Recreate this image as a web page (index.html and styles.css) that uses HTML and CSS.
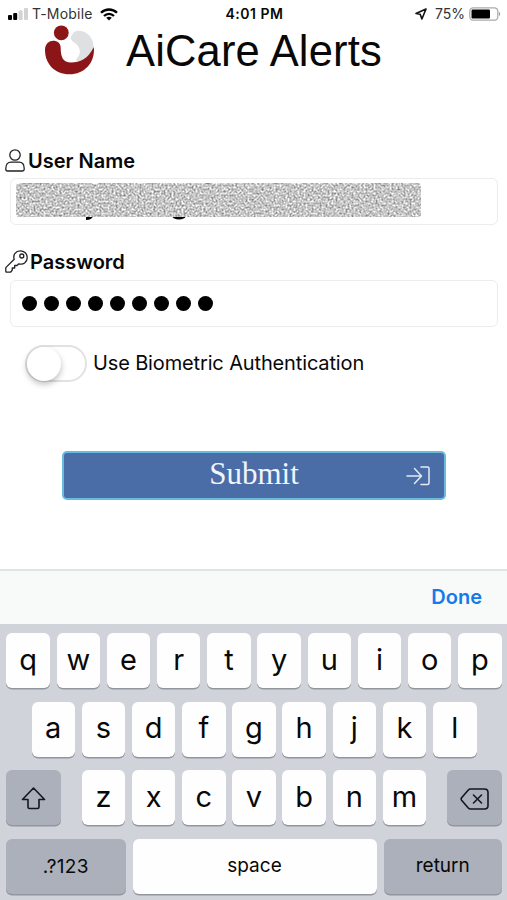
FILE: index.html
```html
<!DOCTYPE html>
<html lang="en">
<head>
<meta charset="utf-8">
<title>AiCare Alerts</title>
<link rel="stylesheet" href="styles.css">
</head>
<body>
<div class="status">
  <div class="status-side">
    <svg width="21" height="12" viewBox="0 0 21 12"><rect x="0" y="7" width="4" height="5" rx="1"/><rect x="5.2" y="5" width="4" height="7" rx="1"/><g fill="#d2d2d2"><rect x="10.6" y="2.5" width="4" height="9.5" rx="1"/><rect x="16" y="0" width="4" height="12" rx="1"/></g></svg>
    <span class="carrier">T-Mobile</span>
    <svg class="wifi" width="18" height="13" viewBox="0 0 18 13" fill="none" stroke="#000" stroke-width="2.3"><path d="M1 4.8C5.5.4 12.500.4 17 4.800M4 8C6.900 5.100 11.100 5.100 14 8"/><path d="M6.200 9.800Q9 7.800 11.800 9.800L9 12.600Z" fill="#000" stroke="none"/></svg>
  </div>
  <span class="time">4:01 PM</span>
  <div class="status-side end">
    <svg width="12" height="12" viewBox="0 0 12 12" fill="none" stroke="#111" stroke-width="1.600" stroke-linejoin="round"><path d="M11 1L1 5.500L5.200 6.300L6.900 11Z"/></svg>
    <span class="percent">75%</span>
    <svg width="32" height="14" viewBox="0 0 32 14"><rect x=".8" y=".8" width="28" height="12.400" rx="3.500" fill="#fff" stroke="#aaa" stroke-width="1.300"/><rect x="2.500" y="2.600" width="18.500" height="8.800" rx="1.200"/><path d="M30 4.800Q32.300 7 30 9.200Z" fill="#999"/></svg>
  </div>
</div>
<header class="brand">
  <svg width="50" height="50" viewBox="0 0 50 50">
    <path d="M25.700 12C27 7 30 4.500 34 4.700C43 5.500 48.500 12 48.500 21C46 28 41 33 35 35.500C31 36 30 34 33 31C36 27 35 23 32.500 19.500C30 16 26 15.500 25.700 12Z" fill="#dfe0e1"/>
    <circle cx="16.300" cy="6.800" r="7.400" fill="#8c1517"/>
    <path d="M0 24C0 12 15.700 12 15.700 22C15.700 31 18 36.500 26 36.500C35 36.500 43 33 48.800 21C50.500 37 39 48.300 24.500 48.300C10 48.300 0 38 0 24Z" fill="#8c1517"/>
  </svg>
  <h1>AiCare Alerts</h1>
</header>
<main class="form">
  <label class="label user"><svg width="20" height="23" viewBox="0 0 20 23" fill="none" stroke="#222" stroke-width="1.300"><circle cx="10" cy="6" r="5.200"/><path d="M.8 19.500C.8 15 3 13.200 6 13.200H14C17 13.200 19.200 15 19.200 19.500V20.300Q19.200 22 17.500 22H2.500Q.8 22 .8 20.300Z"/></svg><span>User Name</span></label>
  <div class="field">
    <svg width="406" height="38" viewBox="0 0 406 38">
      <filter id="grain" x="0" y="0" width="100%" height="100%" color-interpolation-filters="sRGB"><feTurbulence type="fractalNoise" baseFrequency=".5" numOctaves="2" seed="8"/><feColorMatrix values=".75 .4 0 0 .2  .75 .4 0 0 .2  .75 .4 0 0 .2  0 0 0 0 1"/><feComposite in2="SourceGraphic" operator="in"/></filter>
      <path d="M70 33H77Q76 37 70 37Z"/><ellipse cx="163" cy="33.500" rx="6.500" ry="3"/>
      <rect width="405" height="34" rx="3" fill="#ccc" filter="url(#grain)"/>
    </svg>
  </div>
  <label class="label pass"><svg width="23" height="23" viewBox="0 0 23 23" fill="none" stroke="#222" stroke-width="1.300" stroke-linejoin="round"><path d="M9.200 9.200C7.700 4.800 10.800.8 15.300.8C19.300.8 22.200 3.700 22.200 7.700C22.200 12.200 18.200 15.300 13.800 13.800L12 15.500H9.700V18H7.200V20.300L5.500 22.200H1.500Q.8 22.200.8 21.500V17.600Z"/><circle cx="16.800" cy="6" r="2"/></svg><span>Password</span></label>
  <div class="field dots"><i></i><i></i><i></i><i></i><i></i><i></i><i></i><i></i><i></i></div>
  <div class="option"><span class="toggle"><i></i></span><span class="option-text">Use Biometric Authentication</span></div>
  <button class="submit"><span>Submit</span><svg width="24" height="20" viewBox="0 0 24 20" fill="none" stroke="#e4e9f3" stroke-width="1.500" stroke-linecap="round" stroke-linejoin="round"><path d="M1 10H15M8.500 2.500L15.500 10L8.500 17.500M15 1H21.500Q23 1 23 2.500V17Q23 18.500 21.500 18.500H15"/></svg></button>
</main>
<section class="keyboard">
  <div class="toolbar">Done</div>
  <div class="keys">
    <div class="row"><b>q</b><b>w</b><b>e</b><b>r</b><b>t</b><b>y</b><b>u</b><b>i</b><b>o</b><b>p</b></div>
    <div class="row"><b>a</b><b>s</b><b>d</b><b>f</b><b>g</b><b>h</b><b>j</b><b>k</b><b>l</b></div>
    <div class="row spread">
      <b class="dark"><svg width="25" height="23" viewBox="0 0 25 23" fill="none" stroke="#111820" stroke-width="1.600" stroke-linejoin="round"><path d="M12.500 1L23.500 12.500H18V20Q18 21.500 16.500 21.500H8.500Q7 21.500 7 20V12.500H1.500Z"/></svg></b>
      <div class="row"><b>z</b><b>x</b><b>c</b><b>v</b><b>b</b><b>n</b><b>m</b></div>
      <b class="dark"><svg width="29" height="22" viewBox="0 0 29 22" fill="none" stroke="#111820" stroke-width="1.600" stroke-linejoin="round" stroke-linecap="round"><path d="M10.500 1H24.500Q28 1 28 4.500V17.500Q28 21 24.500 21H10.500Q9.200 21 8.300 20L1.600 12.200Q.7 11 1.600 9.800L8.300 2Q9.200 1 10.500 1ZM13.500 7L21.500 15M21.500 7L13.500 15"/></svg></b>
    </div>
    <div class="row spread words"><b class="dark num">.?123</b><b class="space">space</b><b class="dark return">return</b></div>
  </div>
</section>
</body>
</html>
```

FILE: styles.css
```css
* { box-sizing: border-box; }
body { margin: 0; width: 507px; height: 900px; overflow: hidden; background: #fff; color: #080808; font-family: Inter, "Liberation Sans", sans-serif; display: flex; flex-direction: column; }
svg { display: block; flex: none; }
.status { height: 26px; padding: 1px 6px 0 8px; display: grid; grid-template-columns: 1fr auto 1fr; align-items: center; font-size: 14px; line-height: 26px; }
.status-side { display: flex; align-items: center; }
.carrier { margin-left: 3px; color: #333; letter-spacing: .2px; }
.wifi { margin-left: 7px; }
.time { font-weight: 600; letter-spacing: .5px; }
.end { justify-content: flex-end; }
.percent { margin: 0 4px 0 8px; color: #333; }
.brand { height: 122px; padding-left: 45px; display: flex; align-items: flex-start; }
.brand svg { overflow: visible; }
h1 { margin: 0 0 0 31px; font: 400 43.500px/50px "Liberation Sans", sans-serif; letter-spacing: .15px; white-space: nowrap; }
.form { height: 421px; }
.label { display: flex; align-items: center; height: 24px; font-size: 20px; font-weight: 600; line-height: 24px; }
.label span { padding-top: 1px; }
.user { padding-left: 5px; gap: 3px; }
.pass { padding-left: 5px; gap: 2px; margin-top: 24px; }
.field { height: 47px; width: 488px; margin: 6px 0 0 10px; padding: 4px 0 0 5px; border: 1px solid #ececec; border-radius: 6px; display: flex; }
.dots { margin-top: 7px; padding: 0 0 0 11px; align-items: center; gap: 7px; }
.dots i { width: 15px; height: 15px; border-radius: 50%; background: #000; }
.option { display: flex; align-items: center; height: 40px; margin: 16px 0 0 25px; gap: 6px; }
.toggle { width: 62px; height: 37px; border: 2px solid #e2e2e2; border-radius: 19px; }
.toggle i { display: block; width: 34px; height: 34px; border-radius: 50%; background: #fff; box-shadow: 0 3px 6px #0004; }
.option-text { font-size: 20px; letter-spacing: -.14px; white-space: nowrap; }
.submit { display: grid; grid-template-columns: 1fr auto 1fr; align-items: center; width: 384px; height: 49px; margin: 68px 0 0 62px; padding: 0 14px; border: 2px solid #68bddf; border-radius: 5px; background: #4a6da7; color: #f2f5fc; font: 31px/40px "Liberation Serif", serif; }
.submit span { grid-column: 2; margin-bottom: 4px; }
.submit svg { justify-self: end; }
.keyboard { flex: 1; background: #d0d3da; }
.toolbar { height: 55px; padding-right: 25px; border-top: 2px solid #e1e2e3; background: #f8f9f9; color: #147bec; font-size: 20px; font-weight: 600; line-height: 53px; text-align: right; }
.keys { padding: 9px 5px 0 6px; display: flex; flex-direction: column; gap: 13.500px; }
.row { display: flex; justify-content: center; gap: 6.700px; }
.spread { justify-content: space-between; }
b { width: 43.500px; height: 55px; border-radius: 6px; background: #fefefe; box-shadow: 0 1.500px 0 #92969d; display: flex; align-items: center; justify-content: center; padding-bottom: 3px; font-size: 29px; font-weight: 400; }
.dark { width: 55px; background: #abb0ba; padding: 2px 0 0; }
.words b { font-size: 19px; }
.words .num { width: 119.500px; padding: 1px 0 0; letter-spacing: .3px; }
.words .space { width: 244px; padding-bottom: 2px; }
.words .return { width: 118.500px; padding: 0 0 2px; }
```
